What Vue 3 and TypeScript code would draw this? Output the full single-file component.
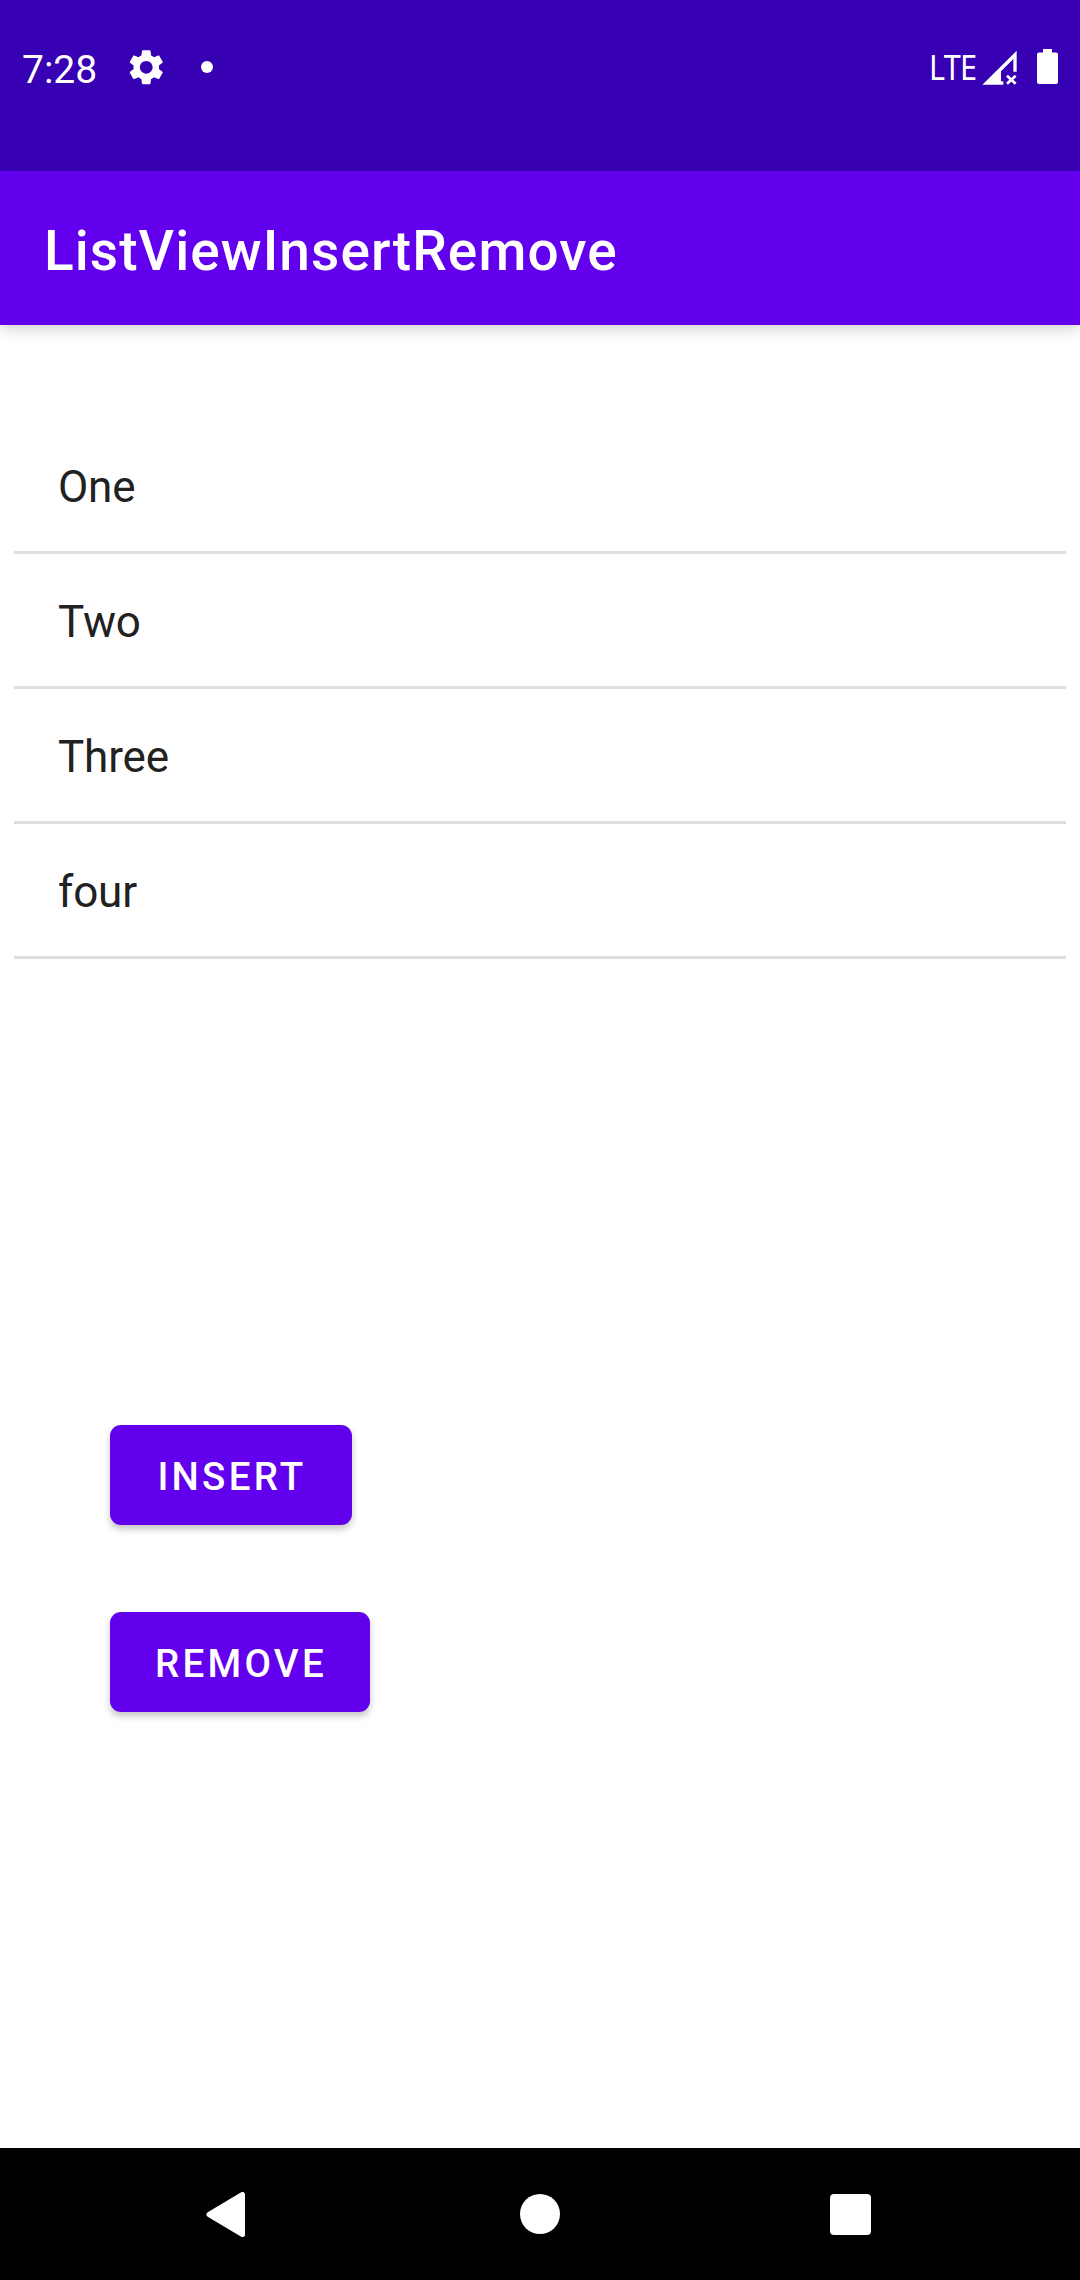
<script setup lang="ts">
import { ref } from 'vue'

const items = ref<string[]>(['One', 'Two', 'Three', 'four'])

function insertItem(): void {
  items.value.push('Item ' + (items.value.length + 1))
}

function removeItem(): void {
  items.value.pop()
}
</script>

<template>
  <div class="screen">
    <header class="status-bar">
      <span class="clock">7:28</span>
      <svg class="gear" viewBox="0 0 24 24" fill="#fff">
        <path d="M19.14 12.94c.04-.3.06-.61.06-.94 0-.32-.02-.64-.07-.94l2.03-1.58c.18-.14.23-.41.12-.61l-1.92-3.32c-.12-.22-.37-.29-.59-.22l-2.39.96c-.5-.38-1.03-.7-1.62-.94l-.36-2.54c-.04-.24-.24-.41-.48-.41h-3.84c-.24 0-.43.17-.47.41l-.36 2.54c-.59.24-1.13.57-1.62.94l-2.39-.96c-.22-.08-.47 0-.59.22L2.74 8.87c-.12.21-.08.47.12.61l2.03 1.58c-.05.3-.09.63-.09.94s.02.64.07.94l-2.03 1.58c-.18.14-.23.41-.12.61l1.92 3.32c.12.22.37.29.59.22l2.39-.96c.5.38 1.03.7 1.62.94l.36 2.54c.05.24.24.41.48.41h3.84c.24 0 .44-.17.47-.41l.36-2.54c.59-.24 1.13-.56 1.62-.94l2.39.96c.22.08.47 0 .59-.22l1.92-3.32c.12-.22.07-.47-.12-.61l-2.01-1.58zM12 15.6c-1.98 0-3.6-1.62-3.6-3.6s1.62-3.6 3.6-3.6 3.6 1.62 3.6 3.6-1.62 3.6-3.6 3.6z" />
      </svg>
      <i class="dot"></i>
      <span class="network">LTE</span>
      <svg class="signal" viewBox="246 60 108 108">
        <path fill="#fff" d="M350 62V125H340V87L303 124V154H310V164H247Z" />
        <path fill="none" stroke="#fff" stroke-width="8" d="M321 137L347 161M347 137L321 161" />
      </svg>
      <svg class="battery" viewBox="0 0 21 36" fill="#fff">
        <path d="M6 0H15V3.500H19Q21 3.500 21 5.500V33Q21 35 19 35H2Q0 35 0 33V5.500Q0 3.500 2 3.500H6Z" />
      </svg>
    </header>

    <div class="app-bar">
      <h1>ListViewInsertRemove</h1>
    </div>

    <main class="content">
      <ul class="list">
        <li v-for="(item, i) in items" :key="i">{{ item }}</li>
      </ul>
      <div class="actions">
        <button class="insert" type="button" @click="insertItem">INSERT</button>
        <button class="remove" type="button" @click="removeItem">REMOVE</button>
      </div>
    </main>

    <nav class="nav-bar">
      <svg class="back" viewBox="0 0 40 46">
        <path d="M36.500 2.500V42.500L3 22.500Z" fill="#fff" stroke="#fff" stroke-width="5" stroke-linejoin="round" />
      </svg>
      <i class="home"></i>
      <i class="recent"></i>
    </nav>
  </div>
</template>

<style>
body {
  margin: 0;
}
</style>

<style scoped>
.screen {
  display: flex;
  flex-direction: column;
  width: 1080px;
  height: 2280px;
  overflow: hidden;
  background: #fff;
  font-family: Roboto, sans-serif;
}

.status-bar {
  display: flex;
  align-items: flex-start;
  flex: none;
  box-sizing: border-box;
  height: 171px;
  padding: 46px 22px 0;
  background: #3700b3;
  color: #fff;
}

.clock {
  width: 76px;
  font-size: 39px;
  line-height: 48px;
  white-space: nowrap;
}

.gear {
  width: 42.500px;
  height: 42.500px;
  margin: 0 0 0 27px;
}

.dot {
  width: 12px;
  height: 12px;
  margin: 15px 0 0 33.500px;
  border-radius: 50%;
  background: #fff;
}

.network {
  width: 53px;
  margin-left: auto;
  font-family: "Noto Sans", sans-serif;
  font-size: 34px;
  line-height: 42px;
  letter-spacing: -0.800px;
  transform: scaleX(0.9);
  transform-origin: left center;
}

.signal {
  width: 36px;
  height: 36px;
  margin-top: 4px;
}

.battery {
  width: 21px;
  height: 36px;
  margin: 3px 0 0 19px;
}

.app-bar {
  position: relative;
  display: flex;
  align-items: center;
  flex: none;
  height: 154px;
  padding-left: 44px;
  background: #6200ee;
  box-shadow: 0 5px 13px rgba(0, 0, 0, 0.16);
}

h1 {
  margin: 5px 0 0;
  color: #fff;
  font-size: 55px;
  font-weight: 500;
  line-height: 64px;
  letter-spacing: 1.070px;
}

.content {
  flex: 1;
  padding-top: 94px;
}

.list {
  height: 916px;
  margin: 0 14px;
  padding: 0;
  list-style: none;
}

.list li {
  box-sizing: border-box;
  height: 135px;
  padding: 4px 44px 0;
  border-bottom: 3px solid #dfdfdf;
  color: #212121;
  font-size: 44px;
  line-height: 128px;
  letter-spacing: -0.150px;
}

.actions {
  display: flex;
  flex-direction: column;
  align-items: flex-start;
  gap: 87px;
  margin: 90px 0 0 110px;
}

button {
  height: 100px;
  padding: 3px 0 0 2px;
  border: 0;
  border-radius: 11px;
  background: #6200ee;
  box-shadow: 0 4px 7px rgba(0, 0, 0, 0.24);
  color: #fff;
  font: 500 38.500px/46px Roboto, sans-serif;
  letter-spacing: 3.250px;
}

.insert {
  width: 242px;
}

.remove {
  width: 260px;
}

.nav-bar {
  display: flex;
  flex: none;
  box-sizing: border-box;
  height: 132px;
  padding: 44px 0 0 206px;
  background: #000;
}

.back {
  width: 40px;
  height: 46px;
}

.home {
  width: 40px;
  height: 40px;
  margin: 2px 0 0 274px;
  border-radius: 50%;
  background: #fff;
}

.recent {
  width: 41px;
  height: 41px;
  margin: 2px 0 0 270px;
  border-radius: 4px;
  background: #fff;
}
</style>
